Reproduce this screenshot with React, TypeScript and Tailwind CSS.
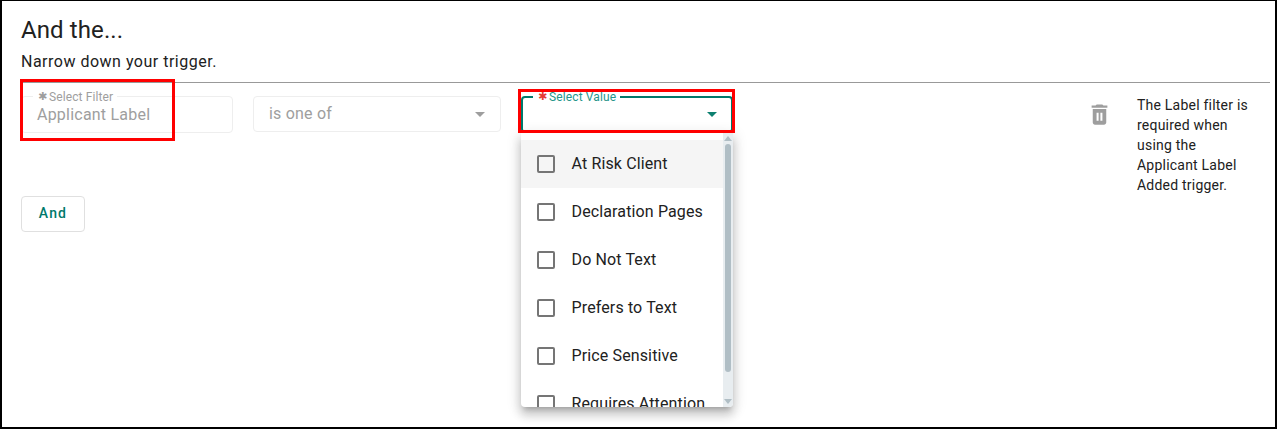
import React from "react";

const items = ["At Risk Client", "Declaration Pages", "Do Not Text", "Prefers to Text", "Price Sensitive", "Requires Attention"];

function Caret({ color }: { color: string }) {
  return (
    <svg width="10" height="5" viewBox="0 0 10 5" className="block">
      <path d="M0 0h10L5 5z" fill={color} />
    </svg>
  );
}

export default function App() {
  return (
    <div className="w-[1277px] h-[429px] bg-white overflow-hidden box-border border-2 border-black border-t-[1px] relative text-[#212121] font-['Roboto',sans-serif]">
      <div className="pl-[19px] pr-[5px] pt-[13px]">
        <h1 className="text-[24px] leading-[32px] font-normal tracking-[0.1px]">And the...</h1>
        <p className="text-[16px] leading-[24px] mt-[4px] tracking-[0.5px]">Narrow down your trigger.</p>
        <div className="h-px bg-[#999999] mt-[8px]" />

        <div className="flex items-start mt-[13px]">
          <div className="relative w-[212px] h-[37px] rounded-[4px] border border-[#eeeeee] shrink-0">
            <span className="absolute left-[11px] -top-[7px] pl-[5px] pr-[4px] bg-white text-[12px] leading-[14px] text-[#9e9e9e] whitespace-nowrap tracking-[0.1px] flex items-center">
              <span className="w-[11px] text-[11px] font-['DejaVu_Sans',sans-serif]">✱</span>Select Filter
            </span>
            <div className="pl-[15px] pt-[8px] text-[16px] leading-[20px] text-[#9e9e9e] tracking-[0.22px]">Applicant Label</div>
          </div>

          <div className="ml-[20px] w-[248px] h-[36px] rounded-[4px] border border-[#eeeeee] flex items-center justify-between pl-[15px] pr-[15px] text-[16px] text-[#9e9e9e] tracking-[0.2px] shrink-0">
            <span>is one of</span>
            <Caret color="#9e9e9e" />
          </div>

          <div className="ml-[20px] relative w-[212px] h-[37px] rounded-[4px] border-2 border-[#00796b] flex items-center justify-end pr-[14px] shrink-0">
            <span className="absolute left-[10px] -top-[8px] pl-[5px] pr-[4px] bg-white text-[12px] leading-[14px] text-[#26958a] whitespace-nowrap tracking-[0.12px] flex items-center">
              <span className="w-[11px] text-[11px] text-[#e53935] font-['DejaVu_Sans',sans-serif]">✱</span>Select Value
            </span>
            <Caret color="#0d8070" />
          </div>

          <div className="ml-[356px] w-[20px] h-[37px] flex items-center justify-center shrink-0">
            <svg width="27" height="27" viewBox="0 0 24 24" fill="#9e9e9e" className="shrink-0">
              <path fillRule="evenodd" d="M6 19c0 1.100.9 2 2 2h8c1.100 0 2-.9 2-2V7H6v12zM9.400 10.500h1.800v7H9.400zM12.800 10.500h1.800v7h-1.800zM15.500 4l-1-1h-5l-1 1H5v2h14V4z" />
            </svg>
          </div>

          <p className="ml-[28px] w-[118px] text-[14px] leading-[20px] tracking-[0.22px] -mt-[1px] shrink-0">
            The Label filter is required when using the Applicant Label Added trigger.
          </p>
        </div>

        <button className="mt-[1px] w-[64px] h-[36px] pb-[2px] rounded-[4px] border border-[#e0e0e0] text-[14px] font-medium tracking-[1.2px] text-[#00796b] bg-white block">
          And
        </button>
      </div>

      {/* open dropdown */}
      <div className="absolute left-[519px] top-[132px] w-[212px] h-[274px] bg-white rounded-b-[4px] shadow-[0_5px_5px_-3px_rgba(0,0,0,0.2),0_8px_10px_1px_rgba(0,0,0,0.14),0_3px_14px_2px_rgba(0,0,0,0.12)] overflow-hidden flex">
        <div className="flex-1 pt-[7px]">
          {items.map((t, i) => (
            <div key={t} className={`h-[48px] flex items-center pl-[16px] text-[16px] tracking-[0.13px] whitespace-nowrap ${i === 0 ? "bg-[#f5f5f5]" : ""}`}>
              <span className="w-[18px] h-[18px] border-2 border-[#757575] rounded-[2px] shrink-0 mr-[16.5px]" />
              {t}
            </div>
          ))}
        </div>
        <div className="w-[10px] bg-[#e8edf0] flex flex-col items-center py-[3px] shrink-0">
          <svg width="8" height="5" viewBox="0 0 8 5" className="block"><path d="M0 5h8L4 0z" fill="#b0bec5" /></svg>
          <div className="w-[6px] h-[228px] mt-[3px] bg-[#b0bec5] rounded-[3px]" />
          <div className="flex-1" />
          <svg width="8" height="5" viewBox="0 0 8 5" className="block"><path d="M0 0h8L4 5z" fill="#b0bec5" /></svg>
        </div>
      </div>

      {/* annotations */}
      <div className="absolute left-[18px] top-[78px] w-[155px] h-[62px] border-[3px] border-[#ff0000]" />
      <div className="absolute left-[516px] top-[88px] w-[217px] h-[44px] border-[3px] border-[#ff0000]" />
    </div>
  );
}
